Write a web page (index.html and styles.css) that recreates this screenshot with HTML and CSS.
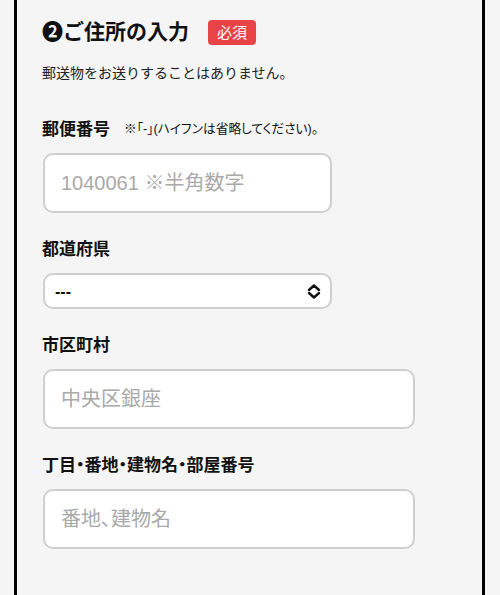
FILE: index.html
```html
<!DOCTYPE html>
<html lang="ja">

<head>
    <meta charset="UTF-8" />
    <meta name="viewport" content="width=device-width, initial-scale=1" />
    <title>ご住所の入力</title>
    <link rel="stylesheet" href="styles.css">
</head>

<body>
    <div class="form-card">
        <div class="section-title">
            <h2>❷ご住所の入力</h2>
            <span class="required">必須</span>
        </div>
        <p class="section-note">郵送物をお送りすることはありません。</p>

        <div class="field">
            <label class="field-label" for="zip">郵便番号<span class="hint">※「-」(ハイフンは省略してください)。</span></label>
            <input class="text-input short" id="zip" type="text" placeholder="1040061 ※半角数字">
        </div>

        <div class="field">
            <label class="field-label" for="pref">都道府県</label>
            <div class="select-wrap">
                <select class="select-input" id="pref">
                    <option>---</option>
                    <option>東京都</option>
                    <option>神奈川県</option>
                </select>
                <svg class="select-arrow" width="14" height="15" viewBox="0 0 14 15">
                    <path d="M2 6 L7 1.5 L12 6 M2 9 L7 13.5 L12 9" fill="none" stroke="#111" stroke-width="2.4" stroke-linecap="round" stroke-linejoin="round" />
                </svg>
            </div>
        </div>

        <div class="field">
            <label class="field-label" for="city">市区町村</label>
            <input class="text-input" id="city" type="text" placeholder="中央区銀座">
        </div>

        <div class="field">
            <label class="field-label" for="addr">丁目・番地・建物名・部屋番号</label>
            <input class="text-input" id="addr" type="text" placeholder="番地、建物名">
        </div>
    </div>
</body>

</html>
```

FILE: styles.css
```css
body {
    margin: 0;
    background: #f5f5f5;
    color: #111;
    font-family: "Liberation Sans", "Noto Sans CJK JP", sans-serif;
}

.form-card {
    margin: 0 15px 0 14px;
    min-height: 595px;
    box-sizing: border-box;
    border-left: 3px solid #000;
    border-right: 3px solid #000;
    padding: 17px 0 0 25px;
}

.section-title {
    display: flex;
    align-items: center;
    height: 30px;
}

.section-title h2 {
    margin: 0;
    font-size: 21px;
    font-weight: bold;
    line-height: 30px;
}

.required {
    margin-left: 19px;
    background: #e84346;
    color: #fff;
    font-size: 15px;
    line-height: 25px;
    padding: 0 9px;
    border-radius: 4px;
}

.section-note {
    margin: 16px 0 0;
    font-size: 14px;
    line-height: 20px;
    color: #222;
}

.field {
    margin-top: 25px;
    padding-left: 1px;
}

.section-note + .field {
    margin-top: 34px;
}

.field-label {
    display: block;
    margin: 0 0 11px -1px;
    font-size: 17px;
    font-weight: bold;
    line-height: 24px;
    font-feature-settings: "palt";
}

.hint {
    margin-left: 14px;
    font-size: 12.7px;
    font-weight: normal;
    vertical-align: 2px;
}

.text-input {
    display: block;
    box-sizing: border-box;
    width: 372px;
    height: 60px;
    padding: 0 16px;
    border: 2px solid #cfcfcf;
    border-radius: 10px;
    background: #fff;
    font-family: "Liberation Sans", "Noto Sans CJK JP", sans-serif;
    font-size: 20px;
    font-feature-settings: "palt";
    color: #111;
    outline: none;
}

.text-input.short {
    width: 289px;
}

.text-input::placeholder {
    color: #a9a9a9;
}

.select-wrap {
    position: relative;
    width: 289px;
}

.select-input {
    display: block;
    box-sizing: border-box;
    width: 100%;
    height: 36px;
    padding: 0 10px;
    border: 2px solid #cfcfcf;
    border-radius: 10px;
    background: #fff;
    appearance: none;
    font-family: "Liberation Sans", "Noto Sans CJK JP", sans-serif;
    font-size: 16px;
    font-weight: bold;
    color: #111;
    outline: none;
}

.select-arrow {
    position: absolute;
    right: 11px;
    top: 11px;
    pointer-events: none;
}
```
